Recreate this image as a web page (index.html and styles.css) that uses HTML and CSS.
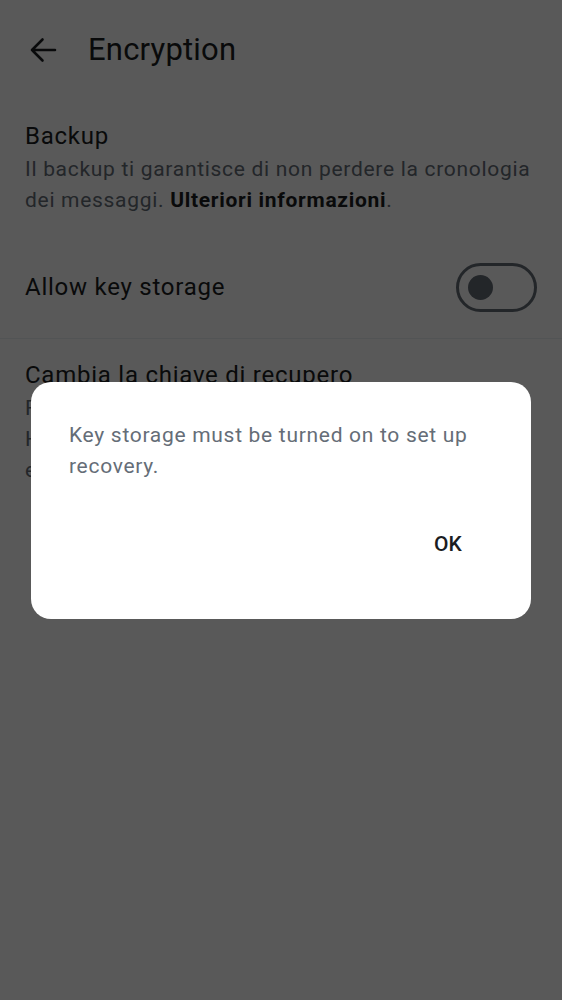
FILE: index.html
```html
<!DOCTYPE html>
<html lang="it">
<head>
<meta charset="utf-8">
<title>Encryption</title>
<link rel="stylesheet" href="styles.css">
</head>
<body>
<div class="screen">
  <header class="appbar">
    <svg class="back" width="28" height="28" viewBox="0 0 28 28" aria-hidden="true">
      <path d="M2 14H25M2 14L12.5 3.5M2 14L12.5 24.5" fill="none" stroke="#1b1d22" stroke-width="2.6" stroke-linecap="round" stroke-linejoin="round"/>
    </svg>
    <h1 class="title">Encryption</h1>
  </header>

  <section class="block">
    <h2 class="item-title">Backup</h2>
    <p class="item-desc">Il backup ti garantisce di non perdere la cronologia dei messaggi. <b class="link">Ulteriori informazioni</b>.</p>
  </section>

  <div class="toggle-row">
    <span class="item-title">Allow key storage</span>
    <span class="switch"><span class="thumb"></span></span>
  </div>
  <hr class="divider">

  <section class="block">
    <h2 class="item-title">Cambia la chiave di recupero</h2>
    <p class="item-desc">Fai una nuova chiave di recupero se hai<br>Hai bisogno della chiave per accedere<br>e al backup dai nuovi dispositivi.</p>
  </section>
</div>

<div class="scrim">
  <div class="dialog" role="alertdialog">
    <p class="dialog-text">Key storage must be turned on to set up recovery.</p>
    <div class="dialog-actions">
      <button class="btn">OK</button>
    </div>
  </div>
</div>
</body>
</html>
```

FILE: styles.css
```css
* { box-sizing: border-box; }

html, body {
  margin: 0;
  padding: 0;
  background: #ffffff;
}

body {
  font-family: Roboto, "Liberation Sans", sans-serif;
  color: #1b1d22;
  width: 562px;
  height: 1000px;
  overflow: hidden;
}

.screen {
  display: flex;
  flex-direction: column;
}

.appbar {
  height: 100px;
  display: flex;
  align-items: center;
  padding-left: 30px;
}

.back {
  flex: none;
  display: block;
}

.title {
  margin: 0 0 0 30px;
  font-size: 31px;
  line-height: 36px;
  font-weight: 400;
  letter-spacing: 0.2px;
  color: #1b1d22;
}

.block {
  padding: 21px 25px 20px;
}

.item-title {
  margin: 0;
  font-size: 24px;
  line-height: 30px;
  font-weight: 400;
  letter-spacing: 0.75px;
  color: #1b1d22;
}

.item-desc {
  margin: 3px 0 0;
  font-size: 21px;
  line-height: 31px;
  letter-spacing: 0.7px;
  color: #656d77;
}

.link {
  font-weight: 700;
  color: #1b1d22;
}

.toggle-row {
  height: 102px;
  padding: 0 25px;
  display: flex;
  align-items: center;
  justify-content: space-between;
}

.switch {
  width: 81px;
  height: 49px;
  border: 3px solid #656d77;
  border-radius: 25px;
  display: flex;
  align-items: center;
  padding-left: 9px;
}

.thumb {
  width: 25px;
  height: 25px;
  border-radius: 50%;
  background: #656d77;
}

.divider {
  margin: 0;
  border: 0;
  height: 1px;
  background: #eceff3;
}

.scrim {
  position: fixed;
  inset: 0;
  background: rgba(0, 0, 0, 0.65);
  display: flex;
  align-items: center;
  justify-content: center;
}

.dialog {
  width: 500px;
  background: #ffffff;
  border-radius: 20px;
  padding: 38px 57px 51px 38px;
  display: flex;
  flex-direction: column;
}

.dialog-text {
  margin: 0;
  font-size: 21px;
  line-height: 31px;
  letter-spacing: 0.7px;
  color: #656d77;
}

.dialog-actions {
  margin-top: 38px;
  display: flex;
  justify-content: flex-end;
}

.btn {
  font-family: inherit;
  font-size: 21px;
  line-height: 24px;
  font-weight: 500;
  letter-spacing: 0.15px;
  color: #1b1d22;
  background: none;
  border: 0;
  padding: 12px;
  cursor: pointer;
}
```
